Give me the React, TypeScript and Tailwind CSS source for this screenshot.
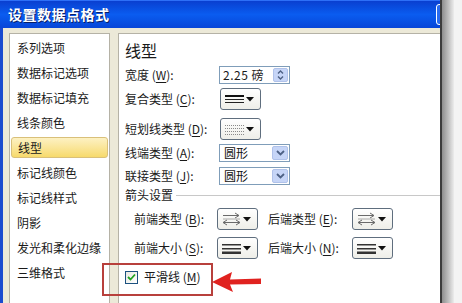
import React from "react";

const F = "font-['Noto_Sans_CJK_SC','Noto_Sans',sans-serif]";

function L({ t, k }: { t: string; k: string }) {
  return (
    <span className="whitespace-nowrap">
      {t} (<span className="underline underline-offset-2">{k}</span>):
    </span>
  );
}

function Tri() {
  return (
    <svg width="8" height="5" viewBox="0 0 8 5">
      <polygon points="0,0 8,0 4,4.5" fill="#111" />
    </svg>
  );
}

function DropBtn({ icon, w = "w-[41px]" }: { icon: React.ReactNode; w?: string }) {
  return (
    <div
      className={`${w} h-[22px] flex items-center justify-between pl-[4px] pr-[6px] rounded-[3px] border border-[#5f6e7e] bg-gradient-to-b from-white to-[#eeeee8]`}
    >
      {icon}
      <Tri />
    </div>
  );
}

const CompoundIcon = (
  <svg width="19" height="13" viewBox="0 0 19 13">
    <rect x="0" y="2" width="19" height="2" fill="#111" />
    <rect x="0" y="6" width="19" height="1" fill="#222" />
    <rect x="0" y="9" width="19" height="1" fill="#222" />
  </svg>
);

const DashIcon = (
  <svg width="19" height="13" viewBox="0 0 19 13">
    {[2, 5, 8, 11].map((y) => (
      <line key={y} x1="0" y1={y + 0.5} x2="19" y2={y + 0.5} stroke="#8a8a8a" strokeWidth="1" strokeDasharray="1 1" />
    ))}
  </svg>
);

const ArrowIcon = (
  <svg width="19" height="14" viewBox="0 0 19 14">
    <line x1="1" y1="3.5" x2="17" y2="3.5" stroke="#6a6a6a" strokeWidth="1" />
    <polyline points="13,1 17,3.5 13,6" fill="none" stroke="#6a6a6a" strokeWidth="1" />
    <line x1="1" y1="7" x2="18" y2="7" stroke="#aaa" strokeWidth="1" />
    <line x1="1" y1="10.5" x2="18" y2="10.5" stroke="#6a6a6a" strokeWidth="1" />
    <polyline points="5,8 1,10.5 5,13" fill="none" stroke="#6a6a6a" strokeWidth="1" />
    <polyline points="14,8 18,10.5 14,13" fill="none" stroke="#6a6a6a" strokeWidth="1" />
  </svg>
);

const SizeIcon = (
  <svg width="19" height="13" viewBox="0 0 19 13">
    <rect x="0" y="2" width="19" height="1.5" fill="#333" />
    <rect x="0" y="6" width="19" height="1.5" fill="#333" />
    <rect x="0" y="9.5" width="19" height="2.5" fill="#333" />
  </svg>
);

function Select({ v }: { v: string }) {
  return (
    <div className="w-[71px] h-[18px] flex items-stretch border border-[#7f9db9] bg-white">
      <div className="flex-1 flex items-center pl-[4px] text-[12px] text-[#111]">{v}</div>
      <div className="w-[16px] m-[1px] flex items-center justify-center bg-[#c6d5f7] border border-[#b0c2ea] rounded-[2px]">
        <svg width="9" height="6" viewBox="0 0 9 6">
          <polyline points="1,1 4.5,4.5 8,1" fill="none" stroke="#4d6185" strokeWidth="1.8" />
        </svg>
      </div>
    </div>
  );
}

const navItems = [
  "系列选项",
  "数据标记选项",
  "数据标记填充",
  "线条颜色",
  "线型",
  "标记线颜色",
  "标记线样式",
  "阴影",
  "发光和柔化边缘",
  "三维格式",
];

export default function App() {
  return (
    <div className={`relative w-[462px] h-[303px] overflow-hidden bg-[#f3f3f3] flex ${F}`}>
      {/* window */}
      <div className="w-[440px] h-full flex flex-col bg-[#ece9d8] overflow-hidden">
        {/* title bar */}
        <div className="h-[28px] shrink-0 flex items-center pl-[8px] bg-gradient-to-b from-[#0a3fd0] via-[#0a5cf0] to-[#0846d8] border-t border-[#2d6ff7]">
          <span className="text-white font-bold text-[14px] tracking-[0.5px] [text-shadow:1px_1px_0_#0a1f66]">
            设置数据点格式
          </span>
          <div className="ml-auto mr-[-17px] w-[21px] h-[21px] rounded-[3px] border border-white bg-[#2a6cf0]" />
        </div>
        {/* body */}
        <div className="flex-1 flex border-l-[3px] border-[#1a4bcf]">
          <div className="pl-[6px] pt-[5px] flex">
            {/* left nav */}
            <div className="w-[101px] h-[290px] border border-[#b5b2a6] bg-white pt-[1px] text-[12px] text-[#1a1a1a]">
              {navItems.map((n) =>
                n === "线型" ? (
                  <div key={n} className="h-[25px] flex items-center px-[1px]">
                    <div className="w-full h-[21px] flex items-center pl-[6px] rounded-[3px] border border-[#d9c07a] bg-gradient-to-b from-[#fdf1c2] to-[#f7da6b]">
                      {n}
                    </div>
                  </div>
                ) : (
                  <div key={n} className="h-[25px] flex items-center pl-[7px]">
                    {n}
                  </div>
                )
              )}
            </div>
          </div>
          {/* right panel */}
          <div className="ml-[8px] mt-[5px] flex-1 h-[290px] border-l border-t border-[#b5b2a6] bg-white pl-[6px] pt-[7px] text-[12px] text-[#1a1a1a]">
            <div className="h-[18px] flex items-center text-[16px] leading-none">线型</div>
            <div className="mt-[7px] h-[18px] flex items-center">
              <div className="w-[94px]"><L t="宽度" k="W" /></div>
              <div className="w-[71px] h-[18px] flex items-center border border-[#7f9db9] bg-white">
                <span className="flex-1 pl-[3px] whitespace-nowrap tracking-[0.5px] text-[12px] leading-none">2.25 磅</span>
                <div className="w-[15px] h-[14px] mr-[1px] flex flex-col items-center justify-center gap-[2px] bg-[#c6d5f7] border border-[#b0c2ea] rounded-[2px]">
                  <svg width="7" height="4" viewBox="0 0 7 4"><polyline points="1,3.5 3.5,1 6,3.5" fill="none" stroke="#4d6185" strokeWidth="1.4" /></svg>
                  <svg width="7" height="4" viewBox="0 0 7 4"><polyline points="1,0.5 3.5,3 6,0.5" fill="none" stroke="#4d6185" strokeWidth="1.4" /></svg>
                </div>
              </div>
            </div>
            <div className="mt-[4px] h-[22px] flex items-center">
              <div className="w-[95px]"><L t="复合类型" k="C" /></div>
              <DropBtn icon={CompoundIcon} />
            </div>
            <div className="mt-[8px] h-[22px] flex items-center">
              <div className="w-[95px]"><L t="短划线类型" k="D" /></div>
              <DropBtn icon={DashIcon} />
            </div>
            <div className="mt-[4px] h-[18px] flex items-center">
              <div className="w-[94px]"><L t="线端类型" k="A" /></div>
              <Select v="圆形" />
            </div>
            <div className="mt-[5px] h-[18px] flex items-center">
              <div className="w-[94px]"><L t="联接类型" k="J" /></div>
              <Select v="圆形" />
            </div>
            <div className="mt-[2px] h-[16px] flex items-center">
              <span className="whitespace-nowrap">箭头设置</span>
              <div className="flex-1 h-px bg-[#c8c8c8] ml-[3px]" />
            </div>
            <div className="mt-[5px] h-[22px] flex items-center pl-[9px]">
              <div className="w-[83px]"><L t="前端类型" k="B" /></div>
              <DropBtn icon={ArrowIcon} w="w-[41px]" />
              <div className="ml-[10px] w-[84px]"><L t="后端类型" k="E" /></div>
              <DropBtn icon={ArrowIcon} w="w-[41px]" />
            </div>
            <div className="mt-[7px] h-[22px] flex items-center pl-[9px]">
              <div className="w-[83px]"><L t="前端大小" k="S" /></div>
              <DropBtn icon={SizeIcon} w="w-[41px]" />
              <div className="ml-[10px] w-[84px]"><L t="后端大小" k="N" /></div>
              <DropBtn icon={SizeIcon} w="w-[41px]" />
            </div>
            <div className="mt-[11px] h-[14px] flex items-center">
              <div className="w-[13px] h-[13px] border border-[#1c5180] bg-gradient-to-br from-[#e8e8e0] to-white flex items-center justify-center">
                <svg width="9" height="8" viewBox="0 0 9 8">
                  <polyline points="1,4 3.5,6.5 8,1.5" fill="none" stroke="#21a121" strokeWidth="1.8" />
                </svg>
              </div>
              <span className="ml-[6px] whitespace-nowrap">平滑线 (<span className="underline underline-offset-2">M</span>)</span>
            </div>
          </div>
        </div>
      </div>
      {/* window right edge and shadow */}
      <div className="w-[2px] h-full bg-[#3c3c3c]" />
      <div className="w-[12px] h-full bg-gradient-to-r from-[#8e8e8e] to-[#ececec]" />

      {/* annotation: red box */}
      <div className="absolute left-[102px] top-[263px] w-[111px] h-[33px] border-2 border-[#b8403c]" />
      {/* annotation: red arrow */}
      <svg className="absolute left-[211px] top-[270px]" width="52" height="24" viewBox="0 0 52 24">
        <polygon points="1,12 21,2 19,9.5 50,8.5 50,14 19,14.5 22,22" fill="#e0221f" />
      </svg>
    </div>
  );
}
